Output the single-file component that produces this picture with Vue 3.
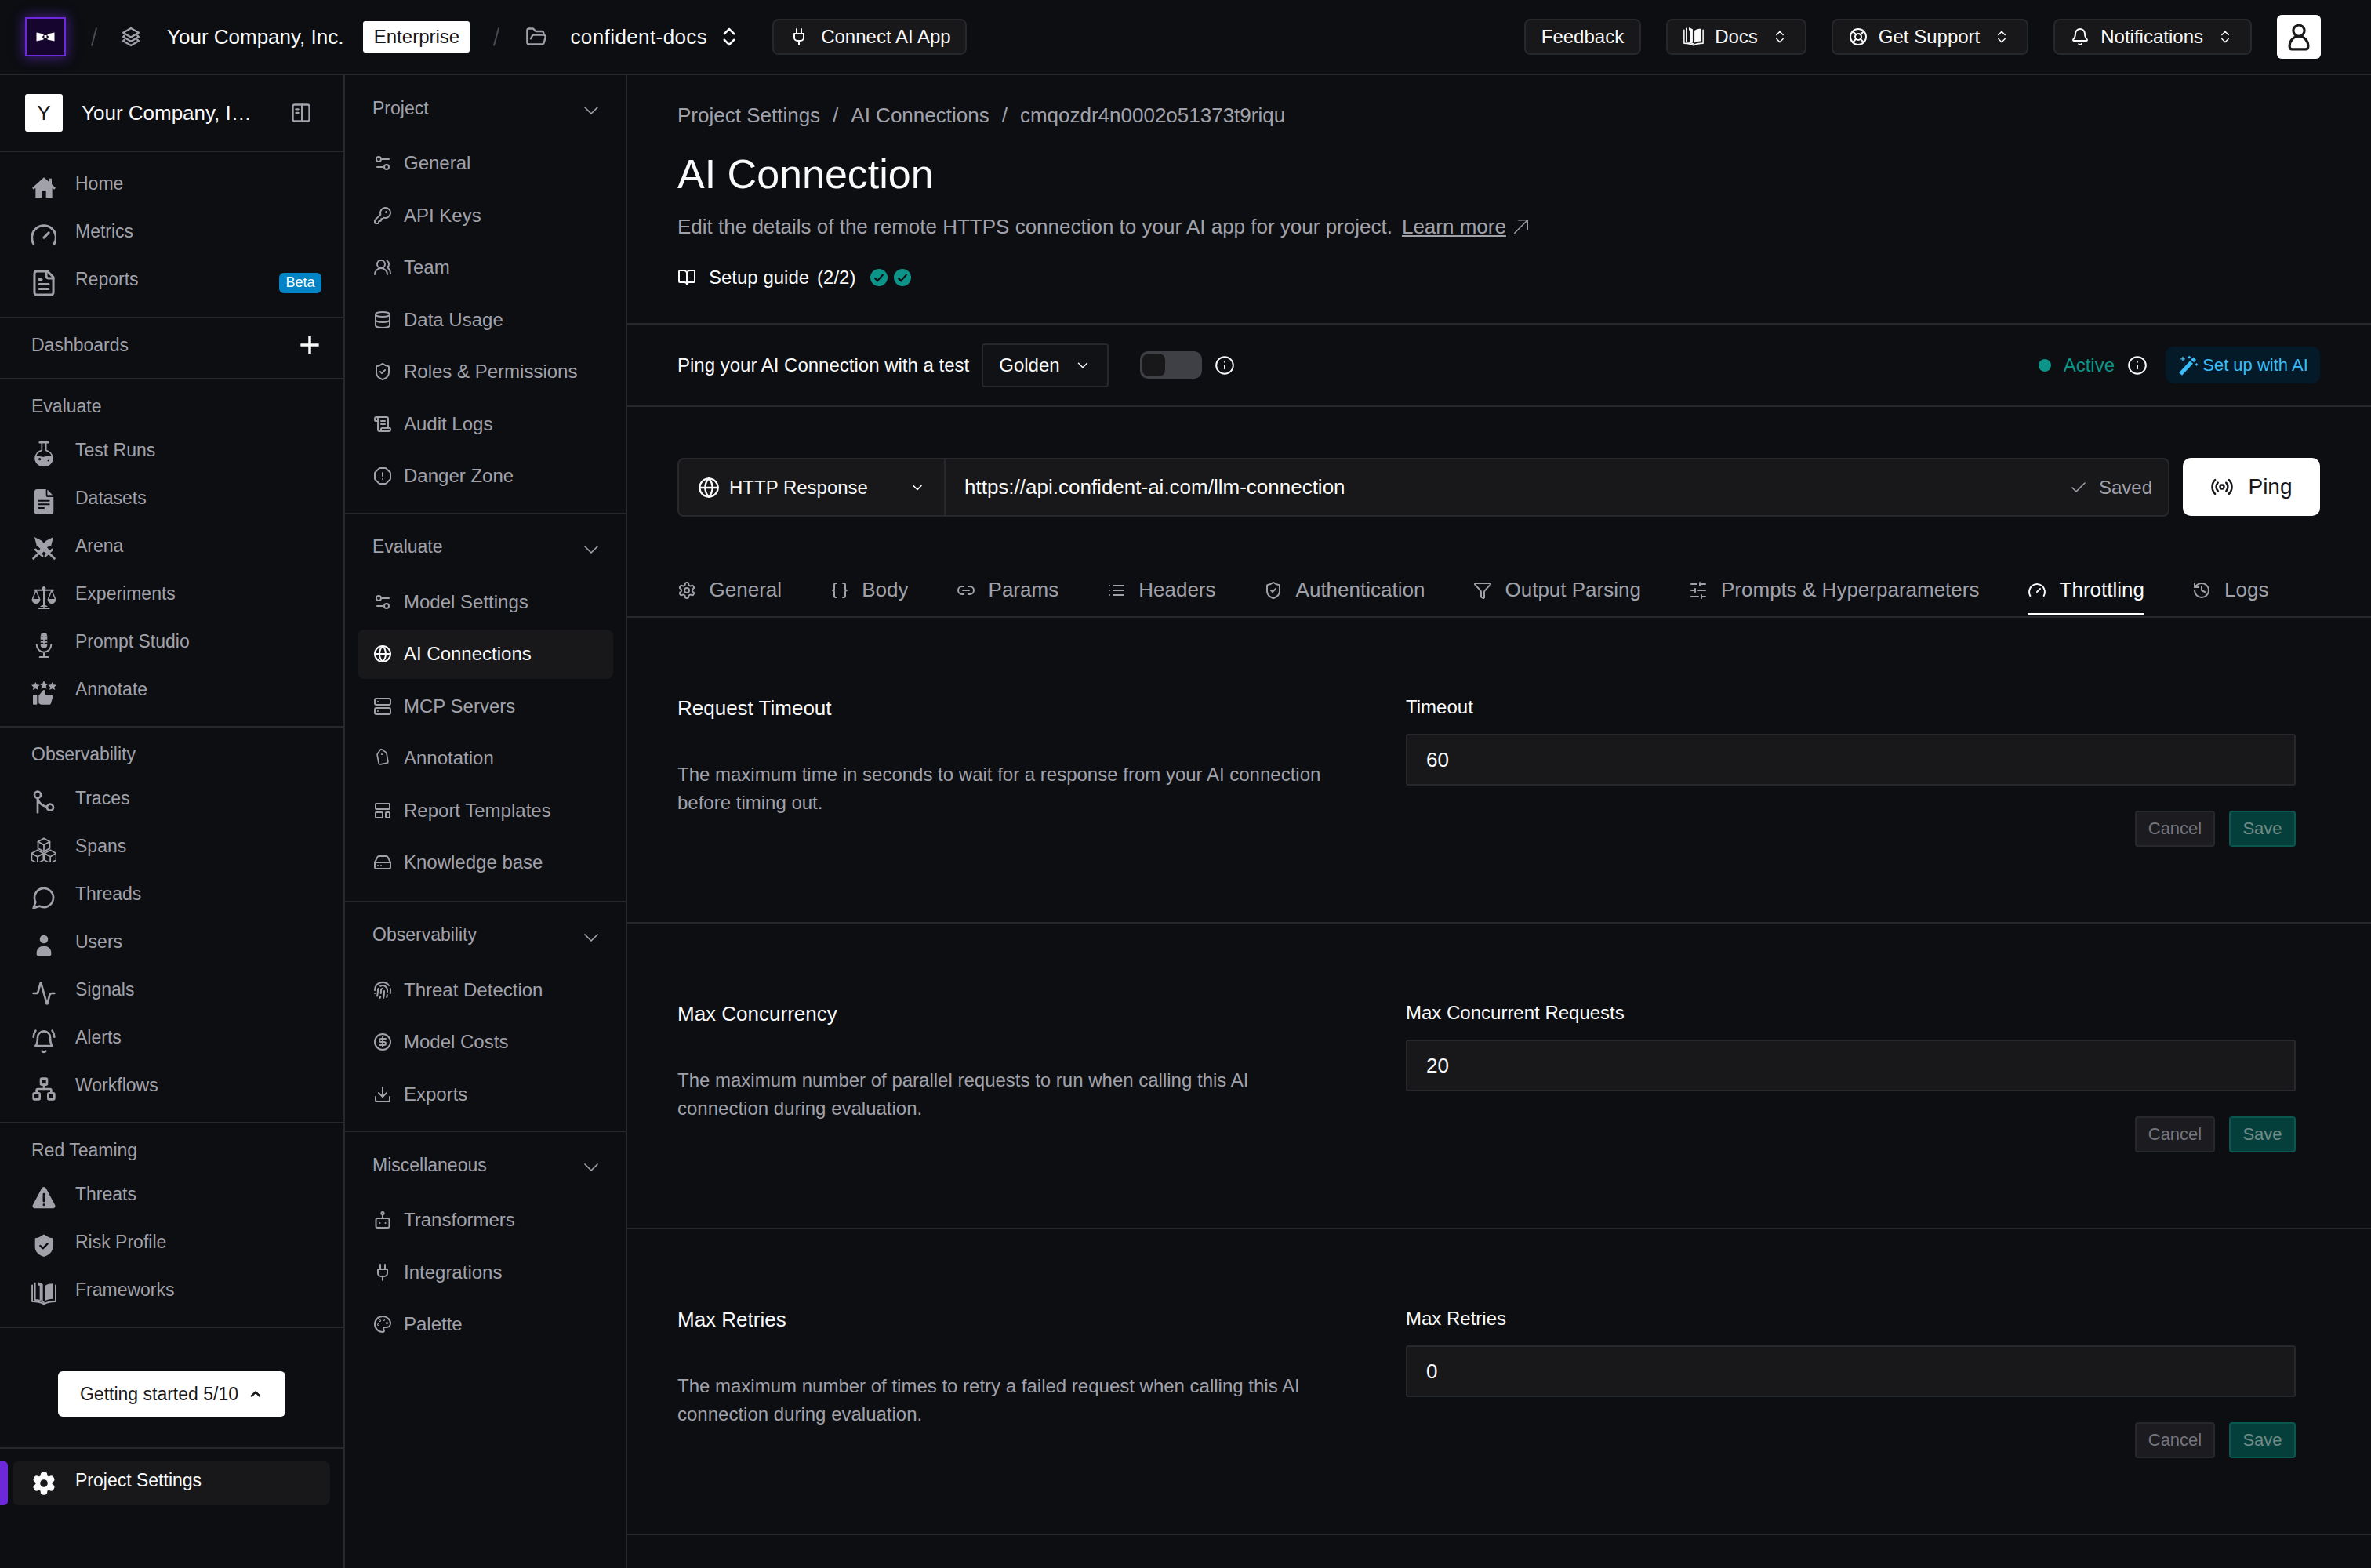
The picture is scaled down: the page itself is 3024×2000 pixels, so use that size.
<script setup>
const cube = (dx, dy) =>
  `<g transform="translate(${dx} ${dy})"><path d="M12 1.5l4.6 2.6v5.2L12 11.9 7.4 9.3V4.1z"/><path d="M7.4 4.1 12 6.7l4.6-2.6M12 6.7v5.2"/></g>`

const icons = {
  sliders2: '<path d="M20 7h-9"/><path d="M14 17H5"/><circle cx="17" cy="17" r="3"/><circle cx="7" cy="7" r="3"/>',
  key: '<path d="M2.586 17.414A2 2 0 0 0 2 18.828V21a1 1 0 0 0 1 1h3a1 1 0 0 0 1-1v-1a1 1 0 0 1 1-1h1a1 1 0 0 0 1-1v-1a1 1 0 0 1 1-1h.172a2 2 0 0 0 1.414-.586l.814-.814a6.5 6.5 0 1 0-4-4z"/><circle cx="16.5" cy="7.5" r=".5"/>',
  team: '<path d="M18 21a8 8 0 0 0-16 0"/><circle cx="10" cy="8" r="5"/><path d="M22 20c0-3.37-2-6.5-4-8a5 5 0 0 0-.45-8.3"/>',
  database: '<ellipse cx="12" cy="5" rx="9" ry="3"/><path d="M3 5V19A9 3 0 0 0 21 19V5"/><path d="M3 12A9 3 0 0 0 21 12"/>',
  shieldCheck: '<path d="M20 13c0 5-3.5 7.5-7.66 8.95a1 1 0 0 1-.67-.01C7.5 20.5 4 18 4 13V6a1 1 0 0 1 1-1c2 0 4.5-1.2 6.24-2.72a1.17 1.17 0 0 1 1.52 0C14.51 3.81 17 5 19 5a1 1 0 0 1 1 1z"/><path d="m9 12 2 2 4-4"/>',
  scroll: '<path d="M15 12h-5"/><path d="M15 8h-5"/><path d="M19 17V5a2 2 0 0 0-2-2H4"/><path d="M8 21h12a2 2 0 0 0 2-2v-1a1 1 0 0 0-1-1H11a1 1 0 0 0-1 1v1a2 2 0 1 1-4 0V5a2 2 0 1 0-4 0v2a1 1 0 0 0 1 1h3"/>',
  octagon: '<path d="M12 16h.01"/><path d="M12 8v4"/><path d="M15.312 2a2 2 0 0 1 1.414.586l4.688 4.688A2 2 0 0 1 22 8.688v6.624a2 2 0 0 1-.586 1.414l-4.688 4.688a2 2 0 0 1-1.414.586H8.688a2 2 0 0 1-1.414-.586l-4.688-4.688A2 2 0 0 1 2 15.312V8.688a2 2 0 0 1 .586-1.414l4.688-4.688A2 2 0 0 1 8.688 2z"/>',
  globe: '<circle cx="12" cy="12" r="10"/><path d="M12 2a14.5 14.5 0 0 0 0 20 14.5 14.5 0 0 0 0-20"/><path d="M2 12h20"/>',
  server: '<rect x="2" y="2" width="20" height="8" rx="2"/><rect x="2" y="14" width="20" height="8" rx="2"/><path d="M6 6h.01"/><path d="M6 18h.01"/>',
  tag: '<g transform="rotate(35 12 12) translate(1.8 1.8) scale(.85)"><path d="M12.586 2.586A2 2 0 0 0 11.172 2H4a2 2 0 0 0-2 2v7.172a2 2 0 0 0 .586 1.414l8.704 8.704a2.426 2.426 0 0 0 3.42 0l6.58-6.58a2.426 2.426 0 0 0 0-3.42z"/><circle cx="7.5" cy="7.5" r=".5"/></g>',
  template: '<rect x="3" y="3" width="18" height="7" rx="1"/><rect x="3" y="14" width="9" height="7" rx="1"/><rect x="16" y="14" width="5" height="7" rx="1"/>',
  drive: '<path d="M22 12H2"/><path d="M5.45 5.11 2 12v6a2 2 0 0 0 2 2h16a2 2 0 0 0 2-2v-6l-3.45-6.89A2 2 0 0 0 16.76 4H7.24a2 2 0 0 0-1.79 1.11z"/><path d="M6 16h.01"/><path d="M10 16h.01"/>',
  fingerprint: '<path d="M12 10a2 2 0 0 0-2 2c0 1.02-.1 2.51-.26 4"/><path d="M14 13.12c0 2.38 0 6.38-1 8.88"/><path d="M17.29 21.02c.12-.6.43-2.3.5-3.02"/><path d="M2 12a10 10 0 0 1 18-6"/><path d="M2 16h.01"/><path d="M21.8 16c.2-2 .131-5.354 0-6"/><path d="M5 19.5C5.5 18 6 15 6 12a6 6 0 0 1 .34-2"/><path d="M8.65 22c.21-.66.45-1.32.57-2"/><path d="M9 6.8a6 6 0 0 1 9 5.2v2"/>',
  dollar: '<circle cx="12" cy="12" r="10"/><path d="M16 8h-6a2 2 0 1 0 0 4h4a2 2 0 1 1 0 4H8"/><path d="M12 18V6"/>',
  download: '<path d="M12 15V3"/><path d="M21 15v4a2 2 0 0 1-2 2H5a2 2 0 0 1-2-2v-4"/><path d="m7 10 5 5 5-5"/>',
  bot: '<circle cx="12" cy="3.5" r="1.6"/><path d="M12 5v5"/><rect x="3.5" y="10" width="17" height="12" rx="2"/><path d="M8.5 16h.01"/><path d="M15.5 16h.01"/>',
  plug: '<path d="M12 22v-5"/><path d="M9 8V2"/><path d="M15 8V2"/><path d="M18 8v5a4 4 0 0 1-4 4h-4a4 4 0 0 1-4-4V8Z"/>',
  palette: '<path d="M12 22a1 1 0 0 1 0-20 10 9 0 0 1 10 9 5 5 0 0 1-5 5h-2.25a1.75 1.75 0 0 0-1.4 2.8l.3.4a1.75 1.75 0 0 1-1.4 2.8z"/><circle cx="13.5" cy="6.5" r=".5"/><circle cx="17.5" cy="10.5" r=".5"/><circle cx="6.5" cy="12.5" r=".5"/><circle cx="8.5" cy="7.5" r=".5"/>',
  chevron: '<path d="m6 9 6 6 6-6"/>',
  chevronUp: '<path d="m6 15 6-6 6 6"/>',
  updown: '<path d="m7 15 5 5 5-5"/><path d="m7 9 5-5 5 5"/>',
  stack: '<path d="M12 2.5 3.5 7.5l8.5 5 8.5-5z"/><path d="M5 10.6 3.5 12l8.5 5 8.5-5L19 10.6"/><path d="M5 15.1 3.5 16.5l8.5 5 8.5-5-1.5-1.4"/>',
  folder: '<path d="m6 14 1.5-2.9A2 2 0 0 1 9.24 10H20a2 2 0 0 1 1.94 2.5l-1.54 6a2 2 0 0 1-1.95 1.5H4a2 2 0 0 1-2-2V5a2 2 0 0 1 2-2h3.9a2 2 0 0 1 1.69.9l.81 1.2a2 2 0 0 0 1.67.9H18a2 2 0 0 1 2 2v2"/>',
  panel: '<rect x="3" y="3" width="18" height="18" rx="2"/><path d="M13 3v18"/><path d="M6.5 8H9"/><path d="M6.5 12H9"/>',
  book: '<path d="M12 7v14"/><path d="M3 18a1 1 0 0 1-1-1V4a1 1 0 0 1 1-1h5a4 4 0 0 1 4 4 4 4 0 0 1 4-4h5a1 1 0 0 1 1 1v13a1 1 0 0 1-1 1h-6a3 3 0 0 0-3 3 3 3 0 0 0-3-3z"/>',
  buoy: '<circle cx="12" cy="12" r="10"/><circle cx="12" cy="12" r="4"/><path d="m4.93 4.93 4.24 4.24"/><path d="m14.83 9.17 4.24-4.24"/><path d="m14.83 14.83 4.24 4.24"/><path d="m9.17 14.83-4.24 4.24"/>',
  bell: '<path d="M10.268 21a2 2 0 0 0 3.464 0"/><path d="M3.262 15.326A1 1 0 0 0 4 17h16a1 1 0 0 0 .74-1.673C19.41 13.956 18 12.499 18 8A6 6 0 0 0 6 8c0 4.499-1.411 5.956-2.738 7.326"/>',
  avatar: '<circle cx="12" cy="7" r="4.500"/><path d="M12 11.500c-4.500 0-7.500 4-7.500 8 0 1.500.8 2.500 2 2.500h11c1.200 0 2-1 2-2.500 0-4-3-8-7.500-8z"/>',
  radio: '<path d="M4.9 19.1C1 15.2 1 8.8 4.9 4.9"/><path d="M7.8 16.2c-2.3-2.3-2.3-6.1 0-8.5"/><circle cx="12" cy="12" r="2"/><path d="M16.2 7.8c2.3 2.3 2.3 6.1 0 8.5"/><path d="M19.1 4.9C23 8.8 23 15.1 19.1 19"/>',
  check: '<path d="M20 6 9 17l-5-5"/>',
  braces: '<path d="M8 3H7a2 2 0 0 0-2 2v5a2 2 0 0 1-2 2 2 2 0 0 1 2 2v5c0 1.1.9 2 2 2h1"/><path d="M16 21h1a2 2 0 0 0 2-2v-5c0-1.1.9-2 2-2a2 2 0 0 1-2-2V5a2 2 0 0 0-2-2h-1"/>',
  link: '<path d="M9 17H7A5 5 0 0 1 7 7h2"/><path d="M15 7h2a5 5 0 1 1 0 10h-2"/><path d="M8 12h8"/>',
  list: '<path d="M3 12h.01"/><path d="M3 18h.01"/><path d="M3 6h.01"/><path d="M8 12h13"/><path d="M8 18h13"/><path d="M8 6h13"/>',
  funnel: '<path d="M10 20a1 1 0 0 0 .553.895l2 1A1 1 0 0 0 14 21v-7a2 2 0 0 1 .517-1.341L21.74 4.67A1 1 0 0 0 21 3H3a1 1 0 0 0-.742 1.67l7.225 7.989A2 2 0 0 1 10 14z"/>',
  slidersH: '<path d="M21 4h-7"/><path d="M10 4H3"/><path d="M21 12h-9"/><path d="M8 12H3"/><path d="M21 20h-5"/><path d="M12 20H3"/><path d="M14 2v4"/><path d="M8 10v4"/><path d="M16 18v4"/>',
  gauge: '<path d="m12 14 4-4"/><path d="M3.34 19a10 10 0 1 1 17.32 0"/>',
  gaugeBig: '<g transform="translate(12 12) scale(1.15) translate(-12 -12)"><path d="m12 14 4-4"/><path d="M3.34 19a10 10 0 1 1 17.32 0"/></g>',
  history: '<path d="M3 12a9 9 0 1 0 9-9 9.75 9.75 0 0 0-6.74 2.74L3 8"/><path d="M3 3v5h5"/><path d="M12 7v5l4 2"/>',
  gear: '<path d="M12.22 2h-.44a2 2 0 0 0-2 2v.18a2 2 0 0 1-1 1.73l-.43.25a2 2 0 0 1-2 0l-.15-.08a2 2 0 0 0-2.73.73l-.22.38a2 2 0 0 0 .73 2.73l.15.1a2 2 0 0 1 1 1.72v.51a2 2 0 0 1-1 1.74l-.15.09a2 2 0 0 0-.73 2.73l.22.38a2 2 0 0 0 2.73.73l.15-.08a2 2 0 0 1 2 0l.43.25a2 2 0 0 1 1 1.73V20a2 2 0 0 0 2 2h.44a2 2 0 0 0 2-2v-.18a2 2 0 0 1 1-1.73l.43-.25a2 2 0 0 1 2 0l.15.08a2 2 0 0 0 2.73-.73l.22-.39a2 2 0 0 0-.73-2.73l-.15-.08a2 2 0 0 1-1-1.74v-.5a2 2 0 0 1 1-1.74l.15-.09a2 2 0 0 0 .73-2.73l-.22-.38a2 2 0 0 0-2.73-.73l-.15.08a2 2 0 0 1-2 0l-.43-.25a2 2 0 0 1-1-1.73V4a2 2 0 0 0-2-2z"/><circle cx="12" cy="12" r="3"/>',
  gearFill: '<path fill="currentColor" d="M12.22 2h-.44a2 2 0 0 0-2 2v.18a2 2 0 0 1-1 1.73l-.43.25a2 2 0 0 1-2 0l-.15-.08a2 2 0 0 0-2.73.73l-.22.38a2 2 0 0 0 .73 2.73l.15.1a2 2 0 0 1 1 1.72v.51a2 2 0 0 1-1 1.74l-.15.09a2 2 0 0 0-.73 2.73l.22.38a2 2 0 0 0 2.73.73l.15-.08a2 2 0 0 1 2 0l.43.25a2 2 0 0 1 1 1.73V20a2 2 0 0 0 2 2h.44a2 2 0 0 0 2-2v-.18a2 2 0 0 1 1-1.73l.43-.25a2 2 0 0 1 2 0l.15.08a2 2 0 0 0 2.73-.73l.22-.39a2 2 0 0 0-.73-2.73l-.15-.08a2 2 0 0 1-1-1.74v-.5a2 2 0 0 1 1-1.74l.15-.09a2 2 0 0 0 .73-2.73l-.22-.38a2 2 0 0 0-2.73-.73l-.15.08a2 2 0 0 1-2 0l-.43-.25a2 2 0 0 1-1-1.73V4a2 2 0 0 0-2-2z"/><circle cx="12" cy="12" r="3.6" fill="#18181b" stroke="none"/>',
  info: '<circle cx="12" cy="12" r="10"/><path d="M12 16v-4"/><path d="M12 8h.01"/>',
  external: '<path d="M8 3h13v13"/><path d="M21 3 3 21"/>',
  wand: '<path d="M3.5 21.5 15.5 8.5" stroke-width="4.4" stroke-linecap="butt"/><path d="M16.5 7.2 19 4.5" stroke-width="4.4" stroke-linecap="butt"/><path d="M6 3v4M4 5h4M13 2v2M12 3h2M21 10v2M20 11h2" stroke-width="1.2"/>',
  home: '<path fill="currentColor" stroke="none" d="M12 2.5.8 12.6l1.3 1.5L4 12.5V22h6v-7h4v7h6v-9.5l1.9 1.6 1.3-1.5L19.5 9V3.5h-3v2.8z"/>',
  file: '<g transform="translate(12 12) scale(1.13) translate(-12 -12)"><path d="M15 2H6a2 2 0 0 0-2 2v16a2 2 0 0 0 2 2h12a2 2 0 0 0 2-2V7Z"/><path d="M14 2v4a2 2 0 0 0 2 2h4"/><path d="M10 9H8"/><path d="M16 13H8"/><path d="M16 17H8"/></g>',
  flask: '<path d="M8 .9h8" stroke-width="1.800"/><path d="M10 1.500v7C6.500 9.600 3.800 12.500 3.800 16a8.200 7.800 0 0 0 16.400 0c0-3.500-2.700-6.400-6.200-7.500v-7" stroke-width="1.300"/><path fill="currentColor" stroke="none" d="M3.800 14.500c3.500-1.200 5.800.8 8.200.3s4.700-1.500 8.200-.3V16a8.200 7.800 0 0 1-16.400 0z"/><circle cx="8" cy="17" r="1.200" fill="#0c0e12" stroke="none"/><circle cx="13" cy="17" r=".6" fill="#0c0e12" stroke="none"/><circle cx="16" cy="18.500" r=".6" fill="#0c0e12" stroke="none"/>',
  fileFill: '<path fill="currentColor" stroke="none" d="M5.500 0H14v6a1.500 1.500 0 0 0 1.500 1.500h5.700v14a2.500 2.500 0 0 1-2.500 2.500H5.500A2.500 2.500 0 0 1 3 21.500V2.500A2.500 2.500 0 0 1 5.500 0zM15.300.3l5.700 5.900h-5.700z"/><path d="M7 11h10M7 14.500h10M7 18h5" stroke="#0c0e12" stroke-width="1.500"/>',
  swords: '<g fill="currentColor" stroke="none"><path d="M21 0l-7 3.500-3 3.500 3.500 3L19 8z"/><path d="M8.800 10.800 6 14l3.200 2.800 3-3.300z"/></g><path d="M4 12l6.500 6M7 15.500l-5 5" stroke-width="2.200"/><path d="M3 0l7 3.500 8 10-3 3L5 8z" fill="currentColor" stroke="none"/><path d="M13.500 18l6.500-6M17 15.500l5 5" stroke-width="2.200"/>',
  scales: '<path d="M12 2v19M3 5h18M7 22.500h10" stroke-width="1.500"/><path d="M4.500 5 1 14h7zM19.500 5 16 14h7z" stroke-width="1.100"/><g fill="currentColor" stroke="none"><path d="M.5 14h8a4 4 0 0 1-8 0zM15.500 14h8a4 4 0 0 1-8 0z"/><circle cx="12" cy="3.500" r="1.800"/><path d="M8.500 21c.5-1 1.500-1.500 3.500-1.500s3 .5 3.500 1.500z"/></g>',
  mic: '<rect x="8.800" y="0" width="6.400" height="15" rx="3.200" fill="currentColor" stroke="none"/><path d="M5 11.500a7 7 0 0 0 14 0M12 18.500v5M8 23.300h8" stroke-width="1.500"/><path d="M9 4h2M9 7h2M9 10h2M13 4h2M13 7h2M13 10h2" stroke="#0c0e12" stroke-width="1"/>',
  rate: '<g fill="currentColor" stroke="none"><path d="m12 0 1.300 2.800 3 .3-2.300 2 .7 3L12 6.500l-2.700 1.600.7-3-2.300-2 3-.3z"/><path d="m4 1.500 1.200 2.500 2.800.3-2 1.900.6 2.800L4 7.700 1.400 9l.6-2.800-2-1.900 2.800-.3z"/><path d="m20 1.500 1.200 2.500 2.800.3-2 1.900.6 2.800L20 7.700 17.400 9l.6-2.800-2-1.900 2.800-.3z"/><rect x="1.500" y="13.500" width="4" height="9.500" rx=".6"/><path d="M7 14.500 11 9.500c.6-1 2.500-.6 2.500 1l-.5 3h5.500c1.500 0 2.300 1.300 1.900 2.600l-1.500 5.400c-.3 1-1 1.500-2 1.500H10c-1.800 0-3-1-3-2z"/></g>',
  branch: '<circle cx="6" cy="5" r="3"/><path d="M6 8v14"/><path d="M6 9c1 3 4 6.500 9 7.500"/><circle cx="18" cy="17" r="3"/>',
  boxes: `<g stroke-width="1.100" transform="translate(12 12) scale(1.22) translate(-12 -10.500)">${cube(0, 0)}${cube(-5, 9.2)}${cube(5, 9.2)}</g>`,
  chat: '<path d="M7.900 20A9 9 0 1 0 4 16.100L2 22Z"/>',
  userFill: '<circle cx="12" cy="6" r="4" fill="currentColor" stroke="none"/><path fill="currentColor" stroke="none" d="M12 12.500c-4 0-7 2.500-7 6.500v1.500c0 1 .7 1.500 1.500 1.500h11c.8 0 1.500-.5 1.500-1.500V19c0-4-3-6.500-7-6.500z"/>',
  activity: '<path d="M22 12h-2.480a2 2 0 0 0-1.930 1.460l-2.350 8.360a.25.25 0 0 1-.48 0L9.240 2.180a.25.25 0 0 0-.48 0l-2.350 8.360A2 2 0 0 1 4.490 12H2"/>',
  bellRing: '<path d="M10.268 21.500a2 2 0 0 0 3.464 0"/><path d="M4 16.500c.800-.800 2-2.500 2-8a6 6 0 0 1 12 0c0 5.500 1.200 7.200 2 8z"/><path d="M22 8c0-2.300-.8-4.300-2-6"/><path d="M4 2C2.800 3.700 2 5.700 2 8"/>',
  network: '<rect x="16" y="16" width="6" height="6" rx="1"/><rect x="2" y="16" width="6" height="6" rx="1"/><rect x="9" y="2" width="6" height="6" rx="1"/><path d="M5 16v-3a1 1 0 0 1 1-1h12a1 1 0 0 1 1 1v3"/><path d="M12 12V8"/>',
  alert: '<path fill="currentColor" stroke="none" d="M12 1.500c1 0 1.700.6 2.200 1.500l8.300 15.500c1 2-.2 3.500-2.200 3.500H3.700c-2 0-3.200-1.500-2.200-3.500L9.800 3c.5-.9 1.200-1.500 2.200-1.500z"/><path d="M12 8.500v6.500M12 18.500h.01" stroke="#0c0e12" stroke-width="2.200"/>',
  shieldFill: '<path fill="currentColor" stroke="none" d="M20.500 13c0 5-3.700 8-8.100 9.400a1.200 1.200 0 0 1-.8 0C7.200 21 3.500 18 3.500 13V5.500a1 1 0 0 1 1-1c2 0 4.800-1.300 6.700-3a1.200 1.200 0 0 1 1.600 0c1.900 1.700 4.700 3 6.700 3a1 1 0 0 1 1 1z"/><path d="m8.500 12 2.500 2.500 4.500-4.500" stroke="#0c0e12" stroke-width="1.800"/>',
  library: '<g stroke-width="1.400"><path d="M.8 4v15.500c4 0 7.700.5 11.200 2.500 3.500-2 7.200-2.500 11.200-2.500V4"/><path fill="currentColor" stroke="none" d="M6.500 1 11 3V19L8 18V4.500l-1.500-.3zM13 4.500c2-1.500 5-2 7.500-2V17c-3 0-5.500.8-7.500 2z"/><path d="M3.500 2V18c3.500 0 6 .7 8.500 2.500"/></g>'
}

const leftGroups = [
  { items: [{ name: 'Home', icon: 'home' }, { name: 'Metrics', icon: 'gaugeBig' }, { name: 'Reports', icon: 'file', badge: 'Beta' }] },
  { dash: true, title: 'Dashboards', items: [] },
  {
    title: 'Evaluate',
    items: [
      { name: 'Test Runs', icon: 'flask' },
      { name: 'Datasets', icon: 'fileFill' },
      { name: 'Arena', icon: 'swords' },
      { name: 'Experiments', icon: 'scales' },
      { name: 'Prompt Studio', icon: 'mic' },
      { name: 'Annotate', icon: 'rate' }
    ]
  },
  {
    title: 'Observability',
    items: [
      { name: 'Traces', icon: 'branch' },
      { name: 'Spans', icon: 'boxes' },
      { name: 'Threads', icon: 'chat' },
      { name: 'Users', icon: 'userFill' },
      { name: 'Signals', icon: 'activity' },
      { name: 'Alerts', icon: 'bellRing' },
      { name: 'Workflows', icon: 'network' }
    ]
  },
  {
    title: 'Red Teaming',
    items: [
      { name: 'Threats', icon: 'alert' },
      { name: 'Risk Profile', icon: 'shieldFill' },
      { name: 'Frameworks', icon: 'library' }
    ]
  }
]

const panelSections = [
  {
    title: 'Project',
    items: [
      { name: 'General', icon: 'sliders2' },
      { name: 'API Keys', icon: 'key' },
      { name: 'Team', icon: 'team' },
      { name: 'Data Usage', icon: 'database' },
      { name: 'Roles & Permissions', icon: 'shieldCheck' },
      { name: 'Audit Logs', icon: 'scroll' },
      { name: 'Danger Zone', icon: 'octagon' }
    ]
  },
  {
    title: 'Evaluate',
    items: [
      { name: 'Model Settings', icon: 'sliders2' },
      { name: 'AI Connections', icon: 'globe', active: true },
      { name: 'MCP Servers', icon: 'server' },
      { name: 'Annotation', icon: 'tag' },
      { name: 'Report Templates', icon: 'template' },
      { name: 'Knowledge base', icon: 'drive' }
    ]
  },
  {
    title: 'Observability',
    items: [
      { name: 'Threat Detection', icon: 'fingerprint' },
      { name: 'Model Costs', icon: 'dollar' },
      { name: 'Exports', icon: 'download' }
    ]
  },
  {
    title: 'Miscellaneous',
    items: [
      { name: 'Transformers', icon: 'bot' },
      { name: 'Integrations', icon: 'plug' },
      { name: 'Palette', icon: 'palette' }
    ]
  }
]

const tabs = [
  { name: 'General', icon: 'gear' },
  { name: 'Body', icon: 'braces' },
  { name: 'Params', icon: 'link' },
  { name: 'Headers', icon: 'list' },
  { name: 'Authentication', icon: 'shieldCheck' },
  { name: 'Output Parsing', icon: 'funnel' },
  { name: 'Prompts & Hyperparameters', icon: 'slidersH' },
  { name: 'Throttling', icon: 'gauge', active: true },
  { name: 'Logs', icon: 'history' }
]

const settings = [
  {
    title: 'Request Timeout',
    desc: 'The maximum time in seconds to wait for a response from your AI connection before timing out.',
    label: 'Timeout',
    value: '60'
  },
  {
    title: 'Max Concurrency',
    desc: 'The maximum number of parallel requests to run when calling this AI connection during evaluation.',
    label: 'Max Concurrent Requests',
    value: '20'
  },
  {
    title: 'Max Retries',
    desc: 'The maximum number of times to retry a failed request when calling this AI connection during evaluation.',
    label: 'Max Retries',
    value: '0'
  }
]
</script>

<template>
  <div class="page">
    <header class="topbar">
      <div class="logo">
        <svg viewBox="0 0 24 24" class="logo-mark"><path d="M.5 6.500 9.500 8.500v2l-2 1.500 2 1.500v2l-9 2zM23.500 6.500l-9 2v2l2 1.500-2 1.500v2l9 2z" /><rect x="10.500" y="10" width="3" height="4" /></svg>
      </div>
      <span class="slash"></span>
      <svg class="ic i28 gray stack-ic" viewBox="0 0 24 24" v-html="icons.stack"></svg>
      <span class="org">Your Company, Inc.</span>
      <span class="plan">Enterprise</span>
      <span class="slash second"></span>
      <svg class="ic i28 gray folder-ic" viewBox="0 0 24 24" v-html="icons.folder"></svg>
      <span class="project">confident-docs</span>
      <svg class="ic i30 updown" viewBox="0 0 24 24" v-html="icons.updown"></svg>
      <button class="tbtn connect">
        <svg class="ic i24" viewBox="0 0 24 24" v-html="icons.plug"></svg>
        Connect AI App
      </button>

      <div class="top-right">
        <button class="tbtn feedback">Feedback</button>
        <button class="tbtn">
          <svg class="ic i26" viewBox="0 0 24 24" v-html="icons.library"></svg>
          Docs
          <svg class="ic i20 small-ud" viewBox="0 0 24 24" v-html="icons.updown"></svg>
        </button>
        <button class="tbtn">
          <svg class="ic i24" viewBox="0 0 24 24" v-html="icons.buoy"></svg>
          Get Support
          <svg class="ic i20 small-ud" viewBox="0 0 24 24" v-html="icons.updown"></svg>
        </button>
        <button class="tbtn">
          <svg class="ic i24" viewBox="0 0 24 24" v-html="icons.bell"></svg>
          Notifications
          <svg class="ic i20 small-ud" viewBox="0 0 24 24" v-html="icons.updown"></svg>
        </button>
        <div class="avatar">
          <svg class="ic i38" viewBox="0 0 24 24" v-html="icons.avatar"></svg>
        </div>
      </div>
    </header>

    <div class="body">
      <aside class="sidebar">
        <div class="brand">
          <span class="brand-y">Y</span>
          <span class="brand-name">Your Company, I…</span>
          <svg class="ic i28 gray brand-panel" viewBox="0 0 24 24" v-html="icons.panel"></svg>
        </div>

        <section v-for="g in leftGroups" :key="g.title || 'top'" class="lgroup" :class="{ dash: g.dash, first: !g.title }">
          <div v-if="g.title" class="lhead">
            <span>{{ g.title }}</span>
            <svg v-if="g.dash" class="plus" viewBox="0 0 24 24"><path d="M12 2v20M2 12h20" /></svg>
          </div>
          <div v-for="it in g.items" :key="it.name" class="lrow">
            <svg class="ic i32" viewBox="0 0 24 24" v-html="icons[it.icon]"></svg>
            <span class="ltext">{{ it.name }}</span>
            <span v-if="it.badge" class="beta">{{ it.badge }}</span>
          </div>
        </section>

        <div class="started">
          <button class="started-btn">
            Getting started 5/10
            <svg class="ic i20 strong" viewBox="0 0 24 24" v-html="icons.chevronUp"></svg>
          </button>
        </div>

        <div class="settings-row">
          <span class="marker"></span>
          <div class="settings-link">
            <svg class="ic i32" viewBox="0 0 24 24" v-html="icons.gearFill"></svg>
            <span class="ltext">Project Settings</span>
          </div>
        </div>
      </aside>

      <nav class="panel">
        <section v-for="s in panelSections" :key="s.title" class="psection">
          <div class="phead">
            <span>{{ s.title }}</span>
            <svg class="ic i32 phead-chev" viewBox="0 0 24 24" v-html="icons.chevron"></svg>
          </div>
          <div v-for="it in s.items" :key="it.name" class="prow" :class="{ active: it.active }">
            <svg class="ic i24" viewBox="0 0 24 24" v-html="icons[it.icon]"></svg>
            <span>{{ it.name }}</span>
          </div>
        </section>
      </nav>

      <main class="main">
        <div class="head">
          <div class="crumbs">
            <span>Project Settings</span><i>/</i><span>AI Connections</span><i>/</i><span>cmqozdr4n0002o51373t9riqu</span>
          </div>
          <h1>AI Connection</h1>
          <p class="lead">
            <span>Edit the details of the remote HTTPS connection to your AI app for your project.</span>
            <a>Learn more</a>
            <svg class="ic i22 thin" viewBox="0 0 24 24" v-html="icons.external"></svg>
          </p>
          <div class="guide">
            <svg class="ic i24 white" viewBox="0 0 24 24" v-html="icons.book"></svg>
            <span class="guide-name">Setup guide</span>
            <span class="guide-count">(2/2)</span>
            <span class="done first-done"><svg viewBox="0 0 24 24"><path d="m6 12.500 4 4 8-9" /></svg></span>
            <span class="done"><svg viewBox="0 0 24 24"><path d="m6 12.500 4 4 8-9" /></svg></span>
          </div>
        </div>

        <div class="pingbar">
          <span class="ping-label">Ping your AI Connection with a test</span>
          <div class="golden">
            Golden
            <svg class="ic i22 thin" viewBox="0 0 24 24" v-html="icons.chevron"></svg>
          </div>
          <div class="toggle"><span></span></div>
          <svg class="ic i26 white tight info-a" viewBox="0 0 24 24" v-html="icons.info"></svg>
          <div class="status">
            <span class="dot"></span>
            <span class="active-text">Active</span>
            <svg class="ic i26 white tight" viewBox="0 0 24 24" v-html="icons.info"></svg>
            <button class="setup-ai">
              <svg class="ic i28" viewBox="0 0 24 24" v-html="icons.wand"></svg>
              Set up with AI
            </button>
          </div>
        </div>

        <div class="url-row">
          <div class="url-box">
            <div class="url-type">
              <svg class="ic i28" viewBox="0 0 24 24" v-html="icons.globe"></svg>
              <span>HTTP Response</span>
              <svg class="ic i20 type-chev" viewBox="0 0 24 24" v-html="icons.chevron"></svg>
            </div>
            <span class="url-text">https://api.confident-ai.com/llm-connection</span>
            <span class="saved">
              <svg class="ic i24 thin" viewBox="0 0 24 24" v-html="icons.check"></svg>
              Saved
            </span>
          </div>
          <button class="ping-btn">
            <svg class="ic i30" viewBox="0 0 24 24" v-html="icons.radio"></svg>
            Ping
          </button>
        </div>

        <div class="tabs">
          <div v-for="t in tabs" :key="t.name" class="tab" :class="{ active: t.active }">
            <svg class="ic i24" viewBox="0 0 24 24" v-html="icons[t.icon]"></svg>
            <span>{{ t.name }}</span>
          </div>
        </div>

        <section v-for="s in settings" :key="s.title" class="setting">
          <div class="setting-info">
            <h3>{{ s.title }}</h3>
            <p>{{ s.desc }}</p>
          </div>
          <div class="setting-form">
            <label>{{ s.label }}</label>
            <div class="value">{{ s.value }}</div>
            <div class="actions">
              <button class="cancel">Cancel</button>
              <button class="save">Save</button>
            </div>
          </div>
        </section>
      </main>
    </div>
  </div>
</template>

<style>
html,
body {
  margin: 0;
  background: #0c0e12;
}
</style>

<style scoped>
.page {
  width: 3024px;
  height: 2000px;
  overflow: hidden;
  display: flex;
  flex-direction: column;
  background: #0c0e12;
  color: #fafafa;
  font-family: "Liberation Sans", Arial, sans-serif;
}

button {
  font-family: inherit;
  cursor: pointer;
}

/* shared svg sizing */
.ic {
  flex: none;
  fill: none;
  stroke: currentColor;
  stroke-width: 2;
  stroke-linecap: round;
  stroke-linejoin: round;
}
.thin { stroke-width: 1.6; }
.tight { stroke-width: 1.8; }
.strong { stroke-width: 3; }
.gray { color: #a1a1aa; }
.white { color: #fafafa; }
.i20 { width: 20px; height: 20px; }
.i22 { width: 22px; height: 22px; }
.i24 { width: 24px; height: 24px; }
.i26 { width: 26px; height: 26px; }
.i28 { width: 28px; height: 28px; }
.i30 { width: 30px; height: 30px; }
.i32 { width: 32px; height: 32px; }
.i38 { width: 38px; height: 38px; }

/* top bar */
.topbar {
  height: 96px;
  box-sizing: border-box;
  flex: none;
  display: flex;
  align-items: center;
  padding: 0 64px 0 32px;
  border-bottom: 2px solid #27282c;
}
.logo {
  width: 52px;
  height: 50px;
  box-sizing: border-box;
  border: 2px solid #6d28d9;
  background: #15052f;
  box-shadow: 0 0 14px 2px rgba(109, 40, 217, 0.55);
  display: flex;
  align-items: center;
  justify-content: center;
}
.logo-mark {
  width: 24px;
  height: 24px;
  fill: #fff;
}
.slash {
  width: 2px;
  height: 24px;
  margin-left: 35px;
  background: #4a4b52;
  transform: rotate(15deg);
}
.slash.second {
  margin-left: 33px;
}
.stack-ic { margin-left: 32px; }
.org {
  margin-left: 32px;
  font-size: 26px;
  white-space: nowrap;
}
.plan {
  margin-left: 25px;
  height: 40px;
  width: 136px;
  display: flex;
  align-items: center;
  justify-content: center;
  background: #fff;
  color: #18181b;
  font-size: 24px;
  border-radius: 3px;
}
.folder-ic { margin-left: 36px; }
.project {
  margin-left: 29px;
  font-size: 26px;
  letter-spacing: 0.4px;
  white-space: nowrap;
}
.updown { margin-left: 13px; }
.tbtn {
  height: 46px;
  box-sizing: border-box;
  padding: 0 22px 0 20px;
  display: flex;
  align-items: center;
  gap: 14px;
  background: #18181b;
  border: 2px solid #27282c;
  border-radius: 8px;
  color: #fafafa;
  font-size: 24px;
  white-space: nowrap;
}
.connect {
  margin-left: 40px;
  padding: 0 18px 0 20px;
  gap: 16px;
}
.top-right {
  margin-left: auto;
  display: flex;
  align-items: center;
  gap: 32px;
}
.feedback { padding: 0 20px; }
.small-ud { stroke-width: 1.8; margin-left: 4px; }
.avatar {
  width: 56px;
  height: 56px;
  background: #fff;
  border-radius: 6px;
  color: #18181b;
  display: flex;
  align-items: center;
  justify-content: center;
}

.body {
  flex: 1;
  display: flex;
  min-height: 0;
}

/* left sidebar */
.sidebar {
  width: 440px;
  box-sizing: border-box;
  flex: none;
  border-right: 2px solid #27282c;
  display: flex;
  flex-direction: column;
}
.brand {
  height: 98px;
  box-sizing: border-box;
  flex: none;
  display: flex;
  align-items: center;
  padding: 0 40px 0 32px;
  border-bottom: 2px solid #27282c;
}
.brand-y {
  width: 48px;
  height: 48px;
  background: #fff;
  color: #18181b;
  border-radius: 3px;
  display: flex;
  align-items: center;
  justify-content: center;
  font-size: 26px;
}
.brand-name {
  margin-left: 24px;
  font-size: 26px;
  white-space: nowrap;
}
.brand-panel { margin-left: auto; }
.lgroup {
  flex: none;
  padding-bottom: 12px;
  border-bottom: 2px solid #27282c;
}
.lgroup.first { padding-top: 14px; padding-bottom: 13px; }
.lgroup.dash { padding-bottom: 0; }
.lhead {
  height: 28px;
  padding: 20px 29px 16px 40px;
  display: flex;
  align-items: center;
  justify-content: space-between;
  font-size: 23px;
  line-height: 28px;
  color: #a1a1aa;
}
.dash .lhead { padding-bottom: 28px; }
.plus {
  width: 28px;
  height: 28px;
  fill: none;
  stroke: #fafafa;
  stroke-width: 3;
}
.lrow {
  height: 61px;
  display: flex;
  align-items: center;
  gap: 24px;
  padding-left: 40px;
  color: #a1a1aa;
}
.ltext {
  font-size: 23px;
  line-height: 28px;
  margin-bottom: 10px;
}
.settings-link .ltext { margin-bottom: 8px; }
.beta {
  margin-left: auto;
  margin-right: 28px;
  width: 54px;
  height: 26px;
  border-radius: 6px;
  background: #0284c7;
  color: #fafafa;
  font-size: 18px;
  display: flex;
  align-items: center;
  justify-content: center;
}
.started {
  flex: none;
  padding: 55px 0 39px;
  display: flex;
  justify-content: center;
  border-bottom: 2px solid #27282c;
}
.started-btn {
  width: 290px;
  height: 58px;
  background: #fff;
  border: none;
  border-radius: 6px;
  color: #18181b;
  font-size: 23px;
  display: flex;
  align-items: center;
  justify-content: center;
  gap: 12px;
}
.settings-row {
  margin-top: 16px;
  display: flex;
  gap: 6px;
}
.marker {
  width: 10px;
  height: 56px;
  border-radius: 0 5px 5px 0;
  background: #6d28d9;
}
.settings-link {
  width: 405px;
  height: 56px;
  box-sizing: border-box;
  background: #18181b;
  border-radius: 8px;
  padding-left: 24px;
  display: flex;
  align-items: center;
  gap: 24px;
  color: #fafafa;
}

/* second panel */
.panel {
  width: 360px;
  box-sizing: border-box;
  flex: none;
  border-right: 2px solid #27282c;
}
.psection {
  padding-bottom: 11px;
  border-bottom: 2px solid #27282c;
}
.psection:nth-child(2) { padding-bottom: 13px; }
.psection:last-child { border-bottom: none; }
.phead {
  height: 28px;
  padding: 28px 28px 25px 35px;
  display: flex;
  align-items: center;
  justify-content: space-between;
  font-size: 23px;
  color: #a1a1aa;
}
.phead-chev {
  stroke-width: 1.3;
  margin-top: 6px;
}
.prow {
  height: 62.5px;
  margin: 0 16px 4px;
  padding-left: 20px;
  display: flex;
  align-items: center;
  gap: 15px;
  border-radius: 8px;
  font-size: 24px;
  color: #a1a1aa;
}
.prow.active {
  background: #18181b;
  color: #fafafa;
}

/* main column */
.main {
  flex: 1;
  min-width: 0;
  display: flex;
  flex-direction: column;
}
.head {
  height: 318px;
  box-sizing: border-box;
  flex: none;
  padding: 36px 64px 0;
  border-bottom: 2px solid #27282c;
}
.crumbs {
  height: 30px;
  line-height: 30px;
  font-size: 26px;
  color: #a1a1aa;
  display: flex;
}
.crumbs i {
  font-style: normal;
  margin: 0 16px;
}
h1 {
  margin: 30px 0 0;
  font-size: 52px;
  line-height: 60px;
  font-weight: 400;
}
.lead {
  margin: 19px 0 0;
  font-size: 26px;
  line-height: 36px;
  color: #a1a1aa;
  display: flex;
  align-items: center;
  white-space: nowrap;
}
.lead a {
  margin-left: 12px;
  margin-right: 8px;
  text-decoration: underline;
}
.guide {
  margin-top: 29px;
  height: 36px;
  display: flex;
  align-items: center;
  font-size: 24px;
}
.guide-name { margin-left: 16px; }
.guide-count { margin-left: 10px; }
.done {
  width: 22px;
  height: 22px;
  margin-left: 8px;
  border-radius: 50%;
  background: #0d9488;
  display: flex;
}
.first-done { margin-left: 19px; }
.done svg {
  fill: none;
  stroke: #0c0e12;
  stroke-width: 2.4;
}
.pingbar {
  height: 105px;
  box-sizing: border-box;
  flex: none;
  display: flex;
  align-items: center;
  padding: 0 65px 0 64px;
  border-bottom: 2px solid #27282c;
  font-size: 24px;
}
.golden {
  margin-left: 16px;
  width: 162px;
  height: 56px;
  box-sizing: border-box;
  padding: 0 20px;
  display: flex;
  align-items: center;
  justify-content: space-between;
  border: 2px solid #27282c;
  border-radius: 4px;
  background: #111215;
}
.toggle {
  margin-left: 40px;
  width: 79px;
  height: 35px;
  box-sizing: border-box;
  padding: 3px;
  background: #3f3f46;
  border-radius: 10px;
}
.toggle span {
  display: block;
  width: 29px;
  height: 29px;
  background: #18181b;
  border-radius: 8px;
}
.info-a { margin-left: 16px; }
.status {
  margin-left: auto;
  display: flex;
  align-items: center;
}
.dot {
  width: 16px;
  height: 16px;
  border-radius: 50%;
  background: #0d9488;
}
.active-text {
  margin: 0 16px;
  color: #0d9488;
}
.setup-ai {
  margin-left: 23px;
  width: 197px;
  height: 47px;
  border: none;
  border-radius: 10px;
  background: #041a29;
  color: #38bdf8;
  font-size: 22px;
  display: flex;
  align-items: center;
  justify-content: center;
  gap: 4px;
  white-space: nowrap;
}
.url-row {
  flex: none;
  margin: 65px 65px 0 64px;
  display: flex;
  gap: 17px;
}
.url-box {
  flex: 1;
  height: 75px;
  box-sizing: border-box;
  display: flex;
  align-items: center;
  background: #18181b;
  border: 2px solid #27282c;
  border-radius: 8px;
}
.url-type {
  width: 340px;
  height: 100%;
  box-sizing: border-box;
  flex: none;
  padding: 0 24px 0 24px;
  display: flex;
  align-items: center;
  gap: 12px;
  font-size: 24px;
  border-right: 2px solid #27282c;
}
.type-chev { margin-left: auto; }
.url-text {
  margin-left: 24px;
  font-size: 26px;
}
.saved {
  margin-left: auto;
  margin-right: 20px;
  display: flex;
  align-items: center;
  gap: 14px;
  color: #a1a1aa;
  font-size: 24px;
}
.ping-btn {
  width: 175px;
  height: 74px;
  border: none;
  border-radius: 10px;
  background: #fff;
  color: #18181b;
  font-size: 28px;
  display: flex;
  align-items: center;
  justify-content: center;
  gap: 18px;
}
.tabs {
  flex: none;
  margin-top: 77px;
  padding: 0 0 2px 64px;
  display: flex;
  gap: 61.5px;
  border-bottom: 2px solid #27282c;
}
.tab {
  height: 48px;
  box-sizing: border-box;
  display: flex;
  align-items: flex-start;
  gap: 16.6px;
  font-size: 26px;
  line-height: 32px;
  color: #a1a1aa;
  border-bottom: 2px solid transparent;
}
.tab .ic { margin-top: 5px; }
.tab.active {
  color: #fafafa;
  border-bottom-color: #fff;
}
.setting {
  height: 390px;
  box-sizing: border-box;
  flex: none;
  padding: 100px 96px 0 64px;
  display: grid;
  grid-template-columns: 1fr 1135px;
  border-bottom: 2px solid #27282c;
}
.setting h3 {
  margin: 0;
  font-size: 26px;
  line-height: 30px;
  font-weight: 400;
}
.setting p {
  margin: 52px 0 0;
  max-width: 836px;
  font-size: 24px;
  line-height: 36px;
  color: #a1a1aa;
}
.setting label {
  display: block;
  font-size: 24px;
  line-height: 28px;
}
.value {
  margin-top: 20px;
  height: 66px;
  box-sizing: border-box;
  padding: 0 24px;
  display: flex;
  align-items: center;
  background: #18181b;
  border: 2px solid #27282c;
  border-radius: 3px;
  font-size: 26px;
}
.actions {
  margin-top: 32px;
  display: flex;
  justify-content: flex-end;
  gap: 18px;
}
.actions button {
  height: 46px;
  box-sizing: border-box;
  border-radius: 4px;
  font-size: 22px;
  padding: 0;
}
.cancel {
  width: 102px;
  background: #1b1b20;
  border: 2px solid #27282c;
  color: #75757d;
}
.save {
  width: 85px;
  background: #053f3b;
  border: 2px solid #0a5750;
  color: #6f8a87;
}
</style>
